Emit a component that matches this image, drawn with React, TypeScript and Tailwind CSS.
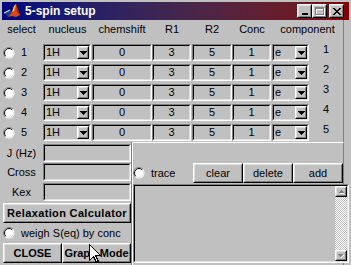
import React from "react";

// classic 3d borders
const raisedOuter = "border border-t-white border-l-white border-r-black border-b-black bg-[#c0c0c0]";
const raisedInner = "border border-t-[#dfdfdf] border-l-[#dfdfdf] border-r-[#808080] border-b-[#808080]";
const sunkenOuter = "border border-t-[#808080] border-l-[#808080] border-r-white border-b-white";
const sunkenInner = "border border-t-black border-l-black border-r-[#dfdfdf] border-b-[#dfdfdf]";

const Button = ({ className = "", children }: { className?: string; children?: React.ReactNode }) => (
  <div className={`${raisedOuter} ${className}`}>
    <div className={`${raisedInner} h-full flex items-center justify-center`}>{children}</div>
  </div>
);

const Edit = ({ className = "", children }: { className?: string; children?: React.ReactNode }) => (
  <div className={`${sunkenOuter} ${className}`}>
    <div className={`${sunkenInner} h-full flex items-center justify-center`}>{children}</div>
  </div>
);

const DownArrow = ({ color = "#000" }: { color?: string }) => (
  <svg width="7" height="4" viewBox="0 0 7 4" shapeRendering="crispEdges">
    <path d="M0 0h7v1H0zM1 1h5v1H1zM2 2h3v1H2zM3 3h1v1H3z" fill={color} />
  </svg>
);

const Popup = ({ className = "", value }: { className?: string; value: string }) => (
  <div className={`${sunkenOuter} ${className}`}>
    <div className={`${sunkenInner} h-full flex items-center`}>
      <span className="pl-[1px] flex-1">{value}</span>
      <Button className="w-[12px] h-full">
        <DownArrow />
      </Button>
    </div>
  </div>
);

const Radio = () => (
  <svg width="12" height="12" viewBox="0 0 12 12" className="shrink-0">
    <circle cx="6" cy="6" r="5.5" fill="#fff" />
    <path d="M2.1 9.9 A5.5 5.5 0 0 1 9.9 2.1" stroke="#808080" fill="none" />
    <path d="M2.8 9.2 A4.5 4.5 0 0 1 9.2 2.8" stroke="#000" fill="none" />
    <path d="M9.2 2.8 A4.5 4.5 0 0 1 2.8 9.2" stroke="#dfdfdf" fill="none" />
  </svg>
);

const MatlabIcon = () => (
  <svg width="16" height="16" viewBox="0 0 16 16">
    <path d="M0 10 L6 7 L8 9 L4 14 Z" fill="#1d3f8a" />
    <path d="M0 10 L6 7" stroke="#ffffff" strokeWidth="1" />
    <path d="M4 14 L8 9 L10 3 L12 1 L16 12 L12 14 L8 13 Z" fill="#d9481a" />
    <path d="M8 9 L10 3 L12 1 L10 8 Z" fill="#ffcc33" />
    <path d="M12 1 L14 7 L16 12 L13 9 Z" fill="#a01c0c" />
  </svg>
);

const Cursor = () => (
  <svg width="12" height="19" viewBox="0 0 12 19" className="absolute left-[89px] top-[244px]" shapeRendering="crispEdges">
    <path d="M0.5 0.5 V16.5 L4.5 12.5 L7.5 18.5 L9.5 17.5 L6.5 11.5 H11.5 Z" fill="#fff" stroke="#000" />
  </svg>
);

const rows = [1, 2, 3, 4, 5];

export default function App() {
  return (
    <div className="relative w-[351px] h-[265px] overflow-hidden bg-[#c0c0c0] text-black text-[11px] leading-none font-['Liberation_Sans',Arial,sans-serif] select-none">
      {/* title bar */}
      <div className="mt-[2px] mx-[2px] h-[18px] flex items-center bg-linear-to-r from-[#000080] to-[#800000]">
        <div className="ml-[2px]">
          <MatlabIcon />
        </div>
        <span className="ml-[5px] text-white font-bold text-[12px]">5-spin setup</span>
        <div className="flex-1" />
        <Button className="w-[15px] h-[14px]">
          <div className="mt-[5px] w-[6px] h-[2px] bg-black" />
        </Button>
        <Button className="w-[15px] h-[14px]">
          <div className="relative w-[9px] h-[8px]">
            <div className="absolute left-[1px] top-[1px] w-[9px] h-[8px] border border-white border-t-2" />
            <div className="absolute left-0 top-0 w-[9px] h-[8px] border border-[#808080] border-t-2" />
          </div>
        </Button>
        <Button className="ml-[2px] mr-[5px] w-[15px] h-[14px]">
          <svg width="8" height="7" viewBox="0 0 8 7" shapeRendering="crispEdges">
            <path d="M0 0h2v1H0zM6 0h2v1H6zM1 1h2v1H1zM5 1h2v1H5zM2 2h4v1H2zM3 3h2v1H3zM2 4h4v1H2zM1 5h2v1H1zM5 5h2v1H5zM0 6h2v1H0zM6 6h2v1H6z" fill="#000" />
          </svg>
        </Button>
      </div>

      {/* table */}
      <div className="w-[344px] border-r border-r-[#808080]">
        <div className="h-[24px] pb-[5px] flex items-center text-center">
          <span className="w-[43px]">select</span>
          <span className="w-[49px]">nucleus</span>
          <span className="w-[60px]">chemshift</span>
          <span className="w-[40px]">R1</span>
          <span className="w-[40px]">R2</span>
          <span className="w-[40px]">Conc</span>
          <span className="flex-1">component</span>
        </div>

        <div className="flex flex-col gap-[3px] pb-[1px]">
          {rows.map((n) => (
            <div key={n} className="h-[17px] flex items-center">
              <div className="w-[43px] flex items-center">
                <div className="ml-[3px]">
                  <Radio />
                </div>
                <span className="ml-[6px]">{n}</span>
              </div>
              <Popup className="w-[48px] h-full" value="1H" />
              <Edit className="ml-[1px] w-[60px] h-full">0</Edit>
              <Edit className="w-[39px] h-full">3</Edit>
              <Edit className="ml-[1px] w-[40px] h-full">5</Edit>
              <Edit className="w-[39px] h-full">1</Edit>
              <Popup className="ml-[1px] w-[37px] h-full" value="e" />
              <span className="w-[34px] text-center mb-[7px]">{n}</span>
            </div>
          ))}
        </div>
      </div>

      {/* lower section */}
      <div className="flex h-[123px]">
        <div className="w-[132px] border-r border-r-[#808080] flex flex-col">
          <div className="mt-[2px] h-[18px] flex items-center">
            <span className="w-[43px] text-center">J (Hz)</span>
            <Edit className="w-[88px] h-full" />
          </div>
          <div className="mt-[1px] h-[18px] flex items-center">
            <span className="w-[43px] text-center">Cross</span>
            <Edit className="w-[88px] h-full" />
          </div>
          <div className="mt-[2px] h-[18px] flex items-center">
            <span className="w-[43px] text-center">Kex</span>
            <Edit className="w-[88px] h-full" />
          </div>
          <Button className="mt-[2px] ml-[3px] w-[128px] h-[20px] font-bold tracking-[0.35px]">
            Relaxation Calculator
          </Button>
          <div className="h-[20px] flex items-center">
            <div className="ml-[3px]">
              <Radio />
            </div>
            <span className="ml-[6px]">weigh S(eq) by conc</span>
          </div>
          <div className="ml-[3px] h-[20px] flex font-bold">
            <Button className="w-[59px] h-full">CLOSE</Button>
            <Button className="w-[69px] h-full">Graph Mode</Button>
          </div>
        </div>

        <div className="w-[212px] border-l border-t border-r border-l-white border-t-white border-r-[#808080] flex flex-col">
          <div className="mt-[20px] h-[20px] flex items-center">
            <Radio />
            <span className="ml-[6px]">trace</span>
            <div className="ml-auto flex h-full">
              <Button className="w-[50px] h-full">clear</Button>
              <Button className="w-[50px] h-full">delete</Button>
              <Button className="w-[50px] h-full">add</Button>
            </div>
          </div>
          <div className={`mt-[1px] w-[216px] h-[79px] shrink-0 ${sunkenOuter}`}>
            <div className={`h-full flex justify-end ${sunkenInner}`}>
              <div className="w-[12px] h-full flex flex-col">
                <Button className="h-[11px] w-full">
                  <svg width="5" height="4" viewBox="0 0 5 4" shapeRendering="crispEdges">
                    <path d="M2 0h1v1H2zM1 1h3v1H1zM0 2h5v1H0z" fill="#808080" />
                    <path d="M1 3h5v1H1z" fill="#fff" />
                  </svg>
                </Button>
                <div className="flex-1 bg-[repeating-conic-gradient(#ffffff_0%_25%,#c0c0c0_0%_50%)] bg-[length:2px_2px]" />
                <Button className="h-[11px] w-full">
                  <svg width="6" height="4" viewBox="0 0 6 4" shapeRendering="crispEdges">
                    <path d="M0 0h5v1H0zM1 1h3v1H1zM2 2h1v1H2z" fill="#808080" />
                    <path d="M5 1h1v1H5zM4 2h1v1H4zM3 3h1v1H3z" fill="#fff" />
                  </svg>
                </Button>
              </div>
            </div>
          </div>
        </div>
      </div>

      <Cursor />
    </div>
  );
}
